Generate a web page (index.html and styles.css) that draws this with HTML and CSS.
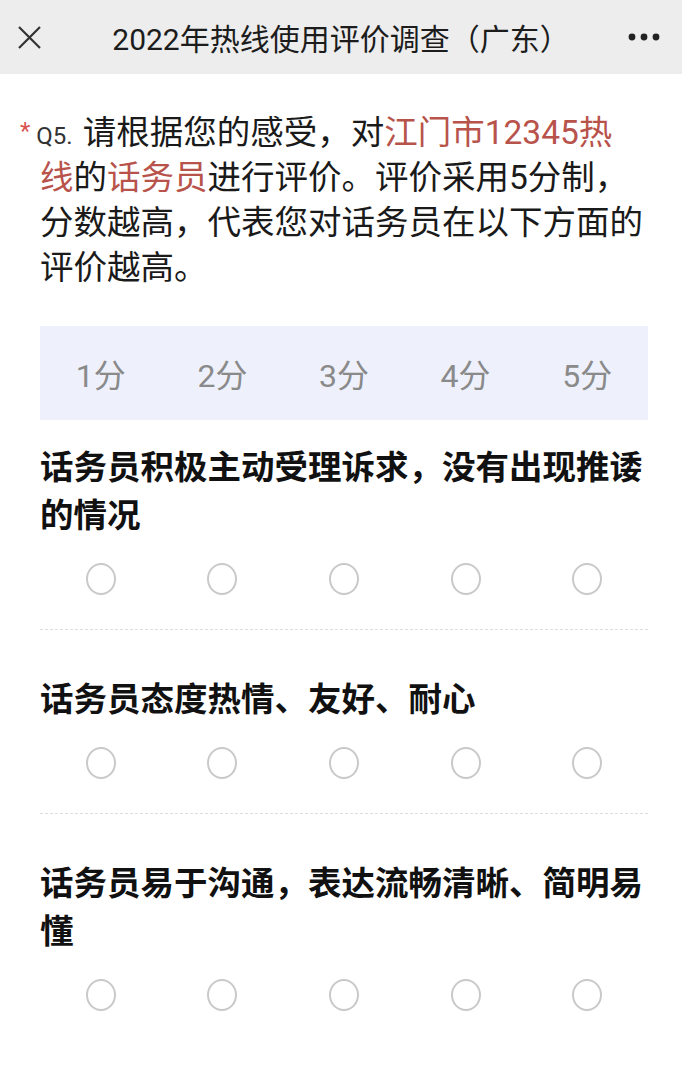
FILE: index.html
```html
<!DOCTYPE html>
<html lang="zh-CN">
<head>
    <meta charset="UTF-8">
    <meta name="viewport" content="width=device-width, initial-scale=1.0">
    <title>2022年热线使用评价调查（广东）</title>
    <link rel="stylesheet" href="styles.css">
</head>
<body>
    <header class="topbar">
        <span class="close">
            <svg width="25" height="25" viewBox="0 0 25 25"><path d="M2 2 L23 23 M23 2 L2 23" stroke="#333" stroke-width="2.2" fill="none"/></svg>
        </span>
        <h1 class="title">2022年热线使用评价调查（广东）</h1>
        <span class="more">
            <svg width="32" height="8" viewBox="0 0 32 8"><circle cx="4" cy="4" r="3.4" fill="#222"/><circle cx="16" cy="4" r="3.4" fill="#222"/><circle cx="28" cy="4" r="3.4" fill="#222"/></svg>
        </span>
    </header>

    <main class="survey">
        <div class="question">
            <span class="req">*</span><span class="qno">Q5.</span>请根据您的感受，对<span class="hl">江门市12345热线</span>的<span class="hl">话务员</span>进行评价。评价采用5分制，分数越高，代表您对话务员在以下方面的评价越高。
        </div>

        <div class="scale">
            <span>1分</span>
            <span>2分</span>
            <span>3分</span>
            <span>4分</span>
            <span>5分</span>
        </div>

        <div class="item">
            <div class="item-title">话务员积极主动受理诉求，没有出现推诿的情况</div>
            <div class="options">
                <span class="radio"></span><span class="radio"></span><span class="radio"></span><span class="radio"></span><span class="radio"></span>
            </div>
        </div>

        <div class="item">
            <div class="item-title">话务员态度热情、友好、耐心</div>
            <div class="options">
                <span class="radio"></span><span class="radio"></span><span class="radio"></span><span class="radio"></span><span class="radio"></span>
            </div>
        </div>

        <div class="item">
            <div class="item-title">话务员易于沟通，表达流畅清晰、简明易懂</div>
            <div class="options">
                <span class="radio"></span><span class="radio"></span><span class="radio"></span><span class="radio"></span><span class="radio"></span>
            </div>
        </div>
    </main>
</body>
</html>
```

FILE: styles.css
```css
body { margin: 0; background: #fff; font-family: Roboto, "Noto Sans CJK SC", sans-serif; color: #1a1a1a; }

.topbar { height: 74px; background: #ededed; display: flex; align-items: center; padding: 0 22px 0 17px; }
.close { display: flex; margin-right: 12px; }
.title { flex: 1; margin: 0; text-align: center; font-size: 30px; font-weight: normal; color: #1c1c1c; }
.more { display: flex; }

.survey { padding: 36px 34px 0 40px; }

.question { font-size: 33.5px; line-height: 45px; padding-right: 3px; color: #1a1a1a; }
.req { color: #d9534f; font-size: 24px; line-height: 1; margin-left: -20px; margin-right: 6px; vertical-align: 5px; }
.qno { font-size: 24px; line-height: 1; color: #333; margin-right: 10px; }
.hl { color: #b8534b; }

.scale { margin-top: 36px; height: 94px; background: #eef1fc; display: grid; grid-template-columns: repeat(5, 1fr); align-items: center; }
.scale span { text-align: center; font-size: 32px; color: #8a8a8a; }

.item { padding: 46px 0 34px; border-bottom: 1px dashed #dedede; }
.scale + .item { padding-top: 24px; }
.item:last-child { border-bottom: none; }
.item-title { font-size: 33.5px; line-height: 48px; font-weight: bold; color: #111; }

.options { margin-top: 23px; display: grid; grid-template-columns: repeat(5, 1fr); justify-items: center; }
.radio { width: 26px; height: 28px; border: 2px solid #c9c9c9; border-radius: 50%; }
```
